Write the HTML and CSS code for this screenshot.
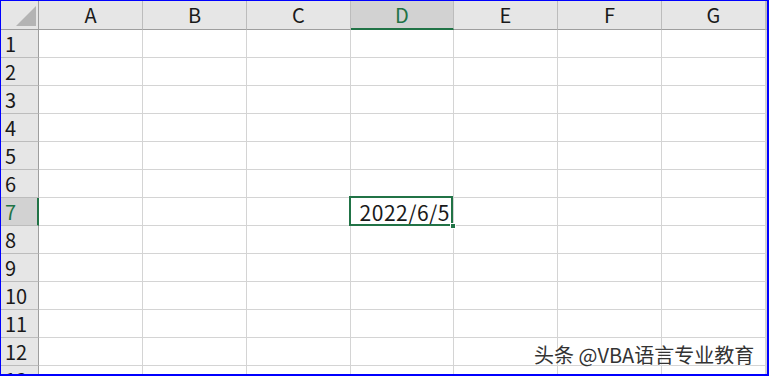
FILE: index.html
```html
<!DOCTYPE html>
<html lang="zh-CN">
<head>
  <meta charset="UTF-8" />
  <meta name="viewport" content="width=device-width, initial-scale=1.0"/>
  <title>Sheet1</title>
  <link rel="stylesheet" href="styles.css">
</head>
<body>
  <div class="sheet">
    <div class="grid">
      <div class="corner"><span class="tri"></span></div>
      <div class="col-head">A</div>
      <div class="col-head">B</div>
      <div class="col-head">C</div>
      <div class="col-head active">D</div>
      <div class="col-head">E</div>
      <div class="col-head">F</div>
      <div class="col-head">G</div>
      <div class="col-head"></div>
    </div>
    <div class="grid body" id="rows"></div>
    <div class="watermark">头条 @VBA语言专业教育</div>
  </div>

  <script>
    const rows = document.getElementById("rows");
    let html = "";
    for (let r = 1; r <= 13; r++) {
      const isActive = r === 7;
      html += `<div class="row-head${isActive ? " active" : ""}">${r}</div>`;
      for (let c = 0; c < 8; c++) {
        if (isActive && c === 3) {
          html += `<div class="cell selected">2022/6/5<span class="handle"></span></div>`;
        } else {
          html += `<div class="cell"></div>`;
        }
      }
    }
    rows.innerHTML = html;
  </script>
</body>
</html>
```

FILE: styles.css
```css
:root {
  --frame: #0000ff;
  --head-bg: #e6e6e6;
  --head-active: #d2d2d2;
  --head-line: #bcbcbc;
  --head-edge: #9e9e9e;
  --grid-line: #d4d4d4;
  --green: #217346;
}

* {
  box-sizing: border-box;
}

body {
  margin: 0;
  background: #fff;
  font-family: "Noto Sans CJK SC", "Noto Sans", sans-serif;
  color: #1a1a1a;
}

.sheet {
  position: relative;
  width: 769px;
  height: 376px;
  overflow: hidden;
  border-top: 1px solid var(--frame);
  border-left: 1px solid var(--frame);
  border-right: 2px solid var(--frame);
  border-bottom: 2px solid var(--frame);
}

.grid {
  display: grid;
  grid-template-columns: 38px 104px 104px 104px 103px 104px 104px 104px 1fr;
}

.grid.body {
  grid-auto-rows: 28px;
}

.corner,
.col-head {
  height: 29px;
  background: var(--head-bg);
  border-bottom: 1px solid var(--head-edge);
}

.corner {
  position: relative;
  border-right: 1px solid var(--head-edge);
}

.tri {
  position: absolute;
  left: 15px;
  top: 5px;
  width: 20px;
  height: 20px;
  background: #b4b4b4;
  clip-path: polygon(100% 0, 100% 100%, 0 100%);
}

.col-head {
  border-right: 1px solid var(--head-line);
  text-align: center;
  font-size: 20px;
  line-height: 28px;
}

.col-head.active {
  background: var(--head-active);
  border-bottom: 2px solid var(--green);
  color: var(--green);
}

.row-head {
  background: var(--head-bg);
  border-right: 1px solid var(--head-edge);
  border-bottom: 1px solid var(--head-line);
  padding-left: 4px;
  font-size: 20px;
  line-height: 27px;
}

.row-head.active {
  background: var(--head-active);
  border-right: 2px solid var(--green);
  color: var(--green);
}

.cell {
  position: relative;
  border-right: 1px solid var(--grid-line);
  border-bottom: 1px solid var(--grid-line);
}

.cell.selected {
  text-align: right;
  padding-right: 3px;
  font-size: 21px;
  letter-spacing: 0.5px;
  line-height: 29px;
}

.cell.selected::after {
  content: "";
  position: absolute;
  top: -2px;
  left: -2px;
  right: 0;
  bottom: -1px;
  border: 2px solid var(--green);
}

.handle {
  position: absolute;
  right: -3px;
  bottom: -4px;
  width: 6px;
  height: 6px;
  background: var(--green);
  border: 1px solid #fff;
  z-index: 1;
}

.watermark {
  position: absolute;
  left: 533px;
  top: 339px;
  font-size: 20px;
  color: #333;
  text-shadow: 0 0 2px #fff, 0 0 2px #fff;
  white-space: nowrap;
}
```
